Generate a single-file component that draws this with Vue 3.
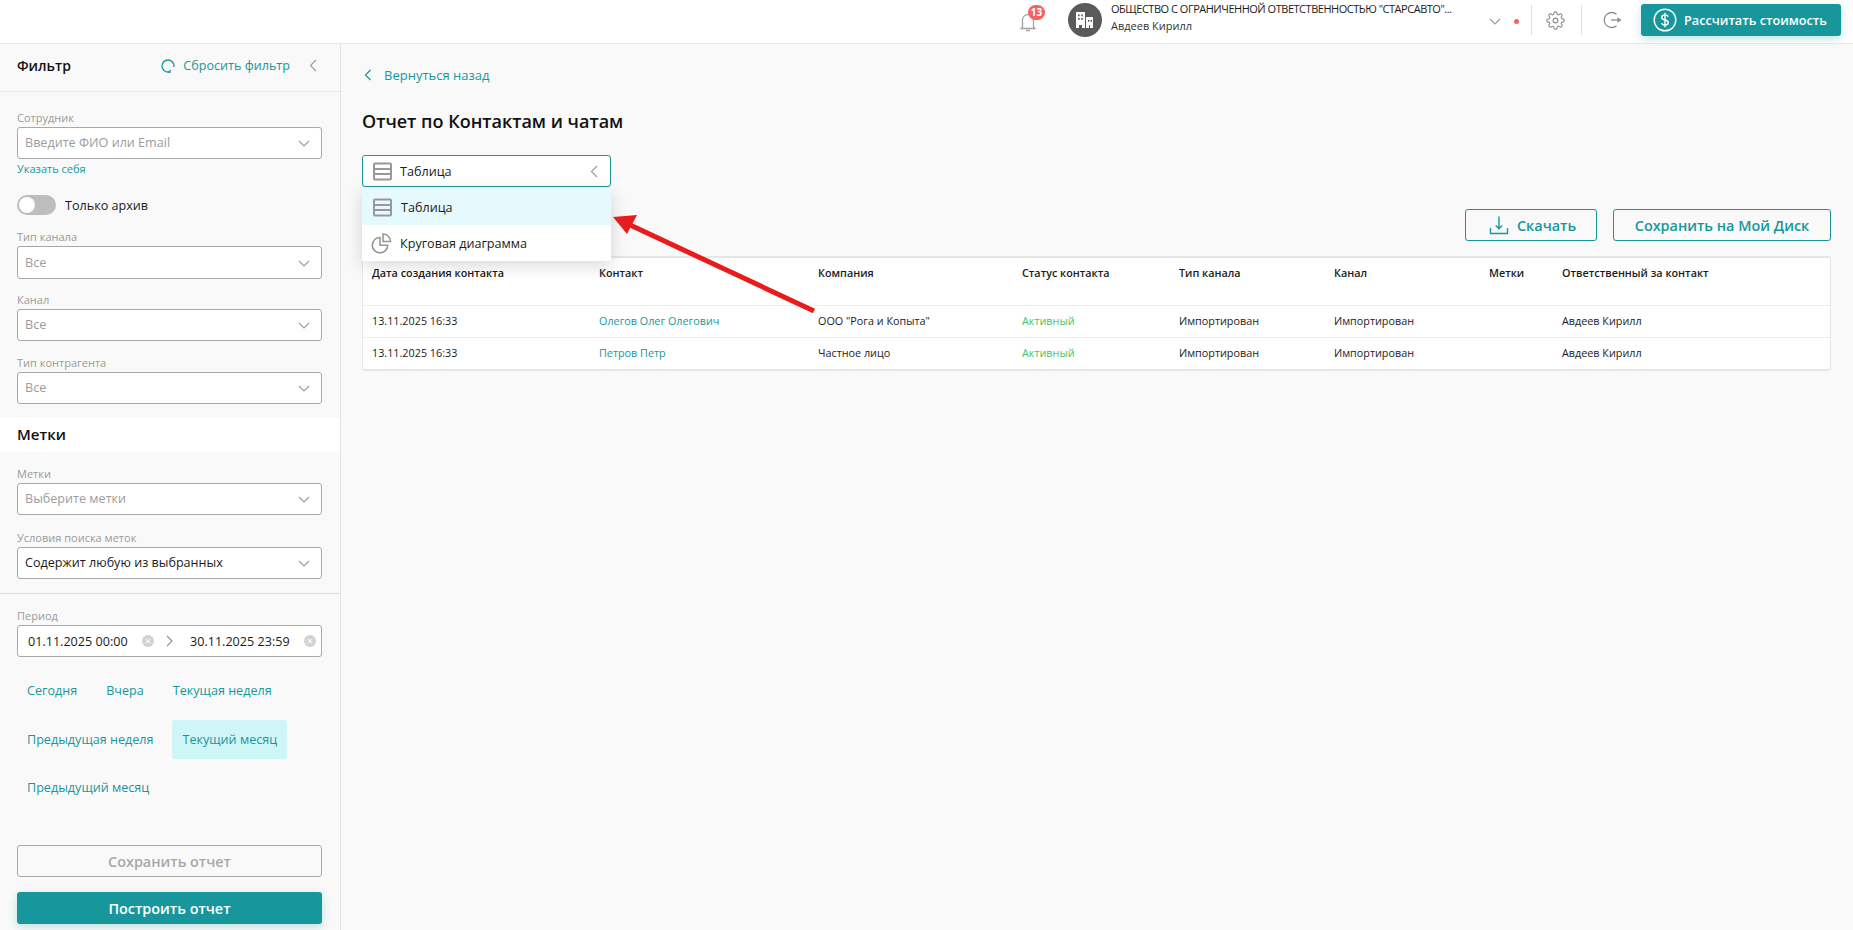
<script setup>
import { ref } from 'vue';

const periods = ref([
  { label: 'Сегодня' },
  { label: 'Вчера' },
  { label: 'Текущая неделя' },
  { label: 'Предыдущая неделя' },
  { label: 'Текущий месяц', active: true },
  { label: 'Предыдущий месяц' }
]);

const headers = ['Дата создания контакта', 'Контакт', 'Компания', 'Статус контакта', 'Тип канала', 'Канал', 'Метки', 'Ответственный за контакт'];

const rows = ref([
  { date: '13.11.2025 16:33', contact: 'Олегов Олег Олегович', company: 'ООО "Рога и Копыта"', status: 'Активный', type: 'Импортирован', channel: 'Импортирован', tags: '', owner: 'Авдеев Кирилл' },
  { date: '13.11.2025 16:33', contact: 'Петров Петр', company: 'Частное лицо', status: 'Активный', type: 'Импортирован', channel: 'Импортирован', tags: '', owner: 'Авдеев Кирилл' }
]);
</script>

<template>
  <div class="page">
    <header class="topbar">
      <div class="bell">
        <svg width="16" height="20" viewBox="0 0 16 20" fill="none" stroke="#a3a3a3" stroke-width="1.3">
          <path d="M2.5 15V8a5.5 5.5 0 0 1 11 0v7l1.5 1.5H1z" stroke-linejoin="round" />
          <path d="M6.5 18.5h3" stroke-linecap="round" />
        </svg>
        <span class="badge">13</span>
      </div>
      <div class="avatar">
        <svg width="20" height="18" viewBox="0 0 20 18" fill="#fff">
          <path d="M1 1h9v16H7v-3H4v3H1z" />
          <path d="M11 6h7v11h-3v-3h-1v3h-3z" />
          <g fill="#5a5a5c">
            <rect x="3" y="3.5" width="1.6" height="1.8" /><rect x="6.2" y="3.5" width="1.6" height="1.8" />
            <rect x="3" y="7" width="1.6" height="1.8" /><rect x="6.2" y="7" width="1.6" height="1.8" />
            <rect x="13" y="9" width="1.4" height="1.8" /><rect x="15.6" y="9" width="1.4" height="1.8" />
          </g>
        </svg>
      </div>
      <div class="account">
        <div class="company">ОБЩЕСТВО С ОГРАНИЧЕННОЙ ОТВЕТСТВЕННОСТЬЮ "СТАРСАВТО"...</div>
        <div class="user">Авдеев Кирилл</div>
      </div>
      <svg class="account-chevron" width="12" height="7" viewBox="0 0 12 7" fill="none" stroke="#9a9a9a" stroke-width="1.1"><path d="M1 1l5 5 5-5" /></svg>
      <span class="dot"></span>
      <span class="vline"></span>
      <svg class="gear" width="19" height="19" viewBox="0 0 24 24" fill="none" stroke="#8f8f8f" stroke-width="1.5">
        <circle cx="12" cy="12" r="3" />
        <path d="M19.4 15a1.65 1.65 0 0 0 .33 1.82l.06.06a2 2 0 0 1 0 2.83 2 2 0 0 1-2.83 0l-.06-.06a1.65 1.65 0 0 0-1.82-.33 1.65 1.65 0 0 0-1 1.51V21a2 2 0 0 1-2 2 2 2 0 0 1-2-2v-.09A1.65 1.65 0 0 0 9 19.4a1.65 1.65 0 0 0-1.82.33l-.06.06a2 2 0 0 1-2.83 0 2 2 0 0 1 0-2.83l.06-.06a1.65 1.65 0 0 0 .33-1.82 1.65 1.65 0 0 0-1.51-1H3a2 2 0 0 1-2-2 2 2 0 0 1 2-2h.09A1.65 1.65 0 0 0 4.6 9a1.65 1.65 0 0 0-.33-1.82l-.06-.06a2 2 0 0 1 0-2.83 2 2 0 0 1 2.83 0l.06.06a1.65 1.65 0 0 0 1.82.33H9a1.65 1.65 0 0 0 1-1.51V3a2 2 0 0 1 2-2 2 2 0 0 1 2 2v.09a1.65 1.65 0 0 0 1 1.51 1.65 1.65 0 0 0 1.82-.33l.06-.06a2 2 0 0 1 2.83 0 2 2 0 0 1 0 2.83l-.06.06a1.65 1.65 0 0 0-.33 1.82V9a1.65 1.65 0 0 0 1.51 1H21a2 2 0 0 1 2 2 2 2 0 0 1-2 2h-.09a1.65 1.65 0 0 0-1.51 1z" />
      </svg>
      <span class="vline vline-second"></span>
      <svg class="logout" width="18" height="18" viewBox="0 0 18 18" fill="none" stroke="#8f8f8f" stroke-width="1.3">
        <path d="M13.5 3.2a7.5 7.5 0 1 0 0 11.6" />
        <path d="M8 9h9.5" />
        <path d="M17.5 9l-2.5-1.5v3z" fill="#8f8f8f" />
      </svg>
      <button class="calc-btn">
        <svg width="24" height="24" viewBox="0 0 24 24" fill="none" stroke="#fff" stroke-width="1.4">
          <circle cx="12" cy="12" r="10.8" />
          <path d="M15.2 8.6c-.6-1.2-1.8-1.7-3.2-1.7-1.8 0-3.2.9-3.2 2.5 0 3.4 6.5 1.7 6.5 5.2 0 1.6-1.5 2.5-3.3 2.5-1.5 0-2.8-.6-3.4-1.9M12 4.8v14.4" />
        </svg>
        Рассчитать стоимость
      </button>
    </header>

    <div class="body">
      <aside class="sidebar">
        <div class="side-head">
          <span class="side-title">Фильтр</span>
          <a class="reset">
            <svg width="14" height="14" viewBox="0 0 14 14" fill="none" stroke="#17979c" stroke-width="1.3">
              <path d="M8 12.9A6 6 0 1 1 12.9 8" />
              <path d="M10 11.2l-2.2 1.7 1.7 1" />
            </svg>
            Сбросить фильтр
          </a>
          <svg class="collapse" width="8" height="13" viewBox="0 0 8 13" fill="none" stroke="#9a9a9a" stroke-width="1.1"><path d="M7 1L1.5 6.5 7 12" /></svg>
        </div>

        <div class="group group-first">
          <label class="label">Сотрудник</label>
          <div class="select muted">Введите ФИО или Email
            <svg class="chev" width="12" height="7" viewBox="0 0 12 7" fill="none" stroke="#9a9a9a" stroke-width="1.1"><path d="M1 1l5 5 5-5" /></svg>
          </div>
          <a class="self-link">Указать себя</a>
        </div>

        <div class="toggle-row">
          <span class="toggle"><span class="knob"></span></span>
          Только архив
        </div>

        <div class="group group-channel">
          <label class="label">Тип канала</label>
          <div class="select muted tall">Все
            <svg class="chev" width="12" height="7" viewBox="0 0 12 7" fill="none" stroke="#9a9a9a" stroke-width="1.1"><path d="M1 1l5 5 5-5" /></svg>
          </div>
        </div>
        <div class="group group-tight">
          <label class="label">Канал</label>
          <div class="select muted">Все
            <svg class="chev" width="12" height="7" viewBox="0 0 12 7" fill="none" stroke="#9a9a9a" stroke-width="1.1"><path d="M1 1l5 5 5-5" /></svg>
          </div>
        </div>
        <div class="group">
          <label class="label">Тип контрагента</label>
          <div class="select muted">Все
            <svg class="chev" width="12" height="7" viewBox="0 0 12 7" fill="none" stroke="#9a9a9a" stroke-width="1.1"><path d="M1 1l5 5 5-5" /></svg>
          </div>
        </div>

        <div class="section-title">Метки</div>

        <div class="group">
          <label class="label">Метки</label>
          <div class="select muted">Выберите метки
            <svg class="chev" width="12" height="7" viewBox="0 0 12 7" fill="none" stroke="#9a9a9a" stroke-width="1.1"><path d="M1 1l5 5 5-5" /></svg>
          </div>
        </div>
        <div class="group group-cond">
          <label class="label">Условия поиска меток</label>
          <div class="select">Содержит любую из выбранных
            <svg class="chev" width="12" height="7" viewBox="0 0 12 7" fill="none" stroke="#9a9a9a" stroke-width="1.1"><path d="M1 1l5 5 5-5" /></svg>
          </div>
        </div>

        <div class="divider"></div>

        <div class="group group-period">
          <label class="label">Период</label>
          <div class="date-range">
            <span class="date">01.11.2025 00:00</span>
            <span class="clear">×</span>
            <svg class="date-sep" width="7" height="12" viewBox="0 0 7 12" fill="none" stroke="#8f8f8f" stroke-width="1.1"><path d="M1 1l5 5-5 5" /></svg>
            <span class="date">30.11.2025 23:59</span>
            <span class="clear">×</span>
          </div>
        </div>

        <div class="periods">
          <a v-for="p in periods" :key="p.label" class="period" :class="{ active: p.active }">{{ p.label }}</a>
        </div>

        <div class="side-actions">
          <button class="save-report">Сохранить отчет</button>
          <button class="build-report">Построить отчет</button>
        </div>
      </aside>

      <main class="main">
        <a class="back">
          <svg width="8" height="12" viewBox="0 0 8 12" fill="none" stroke="#17979c" stroke-width="1.2"><path d="M6.5 1L1.5 6l5 5" /></svg>
          Вернуться назад
        </a>
        <h1 class="title">Отчет по Контактам и чатам</h1>

        <div class="view-wrap">
          <div class="view-select">
            <svg width="19" height="19" viewBox="0 0 19 19" fill="none" stroke="#989898" stroke-width="2">
              <rect x="1" y="1.5" width="17" height="16" rx="1" />
              <path d="M1 7h17M1 12h17" />
            </svg>
            <span>Таблица</span>
            <svg class="view-chev" width="8" height="13" viewBox="0 0 8 13" fill="none" stroke="#9a9a9a" stroke-width="1.1"><path d="M7 1L1.5 6.5 7 12" /></svg>
          </div>
          <div class="view-menu">
            <div class="view-item selected">
              <svg width="19" height="19" viewBox="0 0 19 19" fill="none" stroke="#989898" stroke-width="2">
                <rect x="1" y="1.5" width="17" height="16" rx="1" />
                <path d="M1 7h17M1 12h17" />
              </svg>
              <span>Таблица</span>
            </div>
            <div class="view-item">
              <svg class="pie" width="21" height="21" viewBox="0 0 21 21" fill="none" stroke="#989898" stroke-width="1.6">
                <path d="M9 4.5a7.7 7.7 0 1 0 7.7 7.7H9z" />
                <path d="M12 1a7.5 7.5 0 0 1 7.5 7.5H12z" />
              </svg>
              <span>Круговая диаграмма</span>
            </div>
          </div>
        </div>

        <div class="toolbar">
          <button class="outline">
            <svg width="20" height="20" viewBox="0 0 20 20" fill="none" stroke="#17979c" stroke-width="1.4">
              <path d="M10 1.5v12M6.8 10.5l3.2 3.2 3.2-3.2" />
              <path d="M1.5 13v5.5h17V13" />
            </svg>
            Скачать
          </button>
          <button class="outline">Сохранить на Мой Диск</button>
        </div>

        <div class="report">
          <div class="row head">
            <div v-for="h in headers" :key="h" class="cell">{{ h }}</div>
          </div>
          <div v-for="(r, i) in rows" :key="i" class="row">
            <div class="cell">{{ r.date }}</div>
            <div class="cell contact">{{ r.contact }}</div>
            <div class="cell">{{ r.company }}</div>
            <div class="cell status">{{ r.status }}</div>
            <div class="cell">{{ r.type }}</div>
            <div class="cell">{{ r.channel }}</div>
            <div class="cell">{{ r.tags }}</div>
            <div class="cell">{{ r.owner }}</div>
          </div>
        </div>

        <svg class="arrow" width="230" height="120" viewBox="0 0 230 120">
          <path d="M212 102L26 15" stroke="#e81c1c" stroke-width="5" fill="none" />
          <path d="M11 8L35 6L25 25z" fill="#e81c1c" />
        </svg>
      </main>
    </div>
  </div>
</template>

<style>
html, body { margin: 0; background: #f9f9f9; }
</style>

<style scoped>
.page {
  width: 1853px;
  height: 930px;
  display: flex;
  flex-direction: column;
  overflow: hidden;
  font-family: "Open Sans", "Noto Sans", sans-serif;
  font-size: 12.6px;
  color: #1b1b1b;
  background: #f9f9f9;
}
.topbar {
  height: 44px;
  flex: none;
  box-sizing: border-box;
  display: flex;
  align-items: center;
  background: #fff;
  border-bottom: 1px solid #e9e9e9;
  padding-left: 1020px;
}
.bell { position: relative; width: 16px; height: 20px; margin-top: 1px; }
.badge {
  position: absolute;
  left: 8px;
  top: -7px;
  width: 17px;
  height: 15px;
  border-radius: 8px;
  background: #f26464;
  color: #fff;
  font-size: 10px;
  font-weight: 700;
  line-height: 15px;
  text-align: center;
}
.avatar {
  width: 34px;
  height: 34px;
  margin-left: 32px;
  margin-top: -3px;
  border-radius: 50%;
  background: #5a5a5c;
  display: flex;
  align-items: center;
  justify-content: center;
}
.account { margin-left: 9px; width: 368px; margin-top: -9px; }
.company { font-size: 11px; line-height: 15px; white-space: nowrap; letter-spacing: -0.48px; }
.user { font-size: 11px; line-height: 15px; margin-top: 2px; color: #333; }
.account-chevron { margin-left: 10px; }
.dot { width: 5px; height: 5px; border-radius: 50%; background: #f26464; margin-left: 13px; }
.vline { width: 1px; height: 30px; background: #dedede; margin-left: 12px; margin-top: -4px; }
.gear { margin-left: 14px; margin-top: -3px; }
.vline-second { margin-left: 16px; }
.logout { margin-left: 21px; margin-top: -4px; }
.calc-btn {
  margin-left: 20px;
  margin-top: -4px;
  width: 200px;
  height: 32px;
  box-sizing: border-box;
  padding: 0 0 0 12px;
  display: flex;
  align-items: center;
  gap: 7px;
  border: none;
  border-radius: 3px;
  background: #17979c;
  color: #fff;
  font-family: inherit;
  font-size: 12.7px;
  font-weight: 600;
  box-shadow: 0 3px 8px rgba(23, 151, 156, 0.25);
}
.body { flex: 1; display: flex; min-height: 0; }
.sidebar {
  width: 341px;
  flex: none;
  box-sizing: border-box;
  display: flex;
  flex-direction: column;
  border-right: 1px solid #e4e4e4;
  background: #f9f9f9;
}
.side-head {
  height: 48px;
  flex: none;
  box-sizing: border-box;
  display: flex;
  align-items: center;
  padding: 0 23px 4px 17px;
  border-bottom: 1px solid #e9e9e9;
}
.side-title { font-size: 14px; font-weight: 600; color: #111; }
.reset { margin-left: auto; display: flex; align-items: center; gap: 8px; color: #17979c; font-size: 12.6px; }
.collapse { margin-left: 19px; }
.group { padding: 0 18px 0 17px; margin-top: 15px; }
.group-first { margin-top: 19px; }
.group-tight { margin-top: 14px; }
.group-cond { margin-top: 16px; }
.group-period { margin-top: 15px; }
.label { display: block; font-size: 11px; line-height: 14px; margin-bottom: 2px; color: #9a9a9a; }
.select {
  position: relative;
  height: 32px;
  box-sizing: border-box;
  display: flex;
  align-items: center;
  padding: 0 0 1px 7px;
  background: #fff;
  border: 1px solid #a8a8a8;
  border-radius: 3px;
  color: #1b1b1b;
  font-size: 12.6px;
}
.select.tall { height: 33px; }
.select.muted { color: #9c9c9c; }
.chev { position: absolute; right: 11px; top: 50%; margin-top: -3px; }
.self-link { display: block; margin-top: 3px; color: #17979c; font-size: 11px; line-height: 14px; }
.toggle-row { display: flex; align-items: center; gap: 9px; margin: 19px 17px 0; height: 20px; font-size: 12.6px; }
.toggle { width: 39px; height: 20px; border-radius: 10px; background: #bdbdbd; position: relative; }
.knob { position: absolute; left: 2px; top: 2px; width: 16px; height: 16px; border-radius: 50%; background: #fff; }
.section-title {
  margin-top: 14px;
  height: 34px;
  flex: none;
  background: #fff;
  padding-left: 17px;
  font-size: 15px;
  font-weight: 600;
  line-height: 32px;
  color: #111;
}
.divider { height: 1px; background: #dcdcdc; margin-top: 14px; flex: none; }
.date-range {
  height: 32px;
  box-sizing: border-box;
  display: flex;
  align-items: center;
  padding-left: 10px;
  background: #fff;
  border: 1px solid #a8a8a8;
  border-radius: 3px;
  font-size: 12.6px;
}
.date { width: 108px; white-space: nowrap; }
.clear {
  width: 12px;
  height: 12px;
  margin-left: 6px;
  border-radius: 50%;
  background: #d2d2d2;
  color: #fff;
  font-size: 11px;
  line-height: 11px;
  text-align: center;
}
.date-sep { margin-left: 12px; margin-right: 17px; }
.periods { display: flex; flex-wrap: wrap; gap: 9.5px 9px; padding: 0 17px; margin-top: 14px; }
.period {
  height: 39px;
  box-sizing: border-box;
  padding: 0 10px;
  line-height: 39px;
  border-radius: 3px;
  color: #17979c;
  font-size: 12.6px;
}
.period.active { background: #cff6f7; }
.side-actions {
  margin-top: auto;
  padding: 0 18px 6px 17px;
  display: flex;
  flex-direction: column;
  gap: 15px;
}
.side-actions button {
  height: 32px;
  border-radius: 3px;
  font-family: inherit;
  font-size: 14.4px;
  font-weight: 600;
}
.save-report { background: transparent; border: 1px solid #a8a8a8; color: #a8a8a8; }
.build-report { background: #17979c; border: none; color: #fff; box-shadow: 0 3px 8px rgba(23, 151, 156, 0.25); }
.main { flex: 1; min-width: 0; position: relative; padding: 0 22px 0 21px; }
.back {
  display: flex;
  align-items: center;
  gap: 12px;
  margin-top: 21px;
  margin-left: 2px;
  height: 20px;
  color: #17979c;
  font-size: 13px;
  font-weight: 500;
}
.title {
  margin: 24px 0 0;
  font-size: 18px;
  font-weight: 600;
  line-height: 24px;
  color: #111;
}
.view-wrap { position: relative; width: 249px; margin-top: 22px; }
.view-select {
  height: 32px;
  box-sizing: border-box;
  display: flex;
  align-items: center;
  padding-left: 10px;
  background: #fff;
  border: 1px solid #17979c;
  border-radius: 3px;
  font-size: 12.6px;
}
.view-select span { margin-left: 8px; }
.view-chev { margin-left: auto; margin-right: 12px; }
.view-menu {
  position: absolute;
  left: 0;
  top: 34px;
  width: 249px;
  z-index: 2;
  background: #fff;
  box-shadow: 0 4px 16px rgba(0, 0, 0, 0.16);
}
.view-item {
  height: 36px;
  display: flex;
  align-items: center;
  padding-left: 11px;
  font-size: 12.6px;
}
.view-item span { margin-left: 9px; }
.view-item.selected { background: #e6f9fc; }
.pie { margin-left: -2px; }
.view-item .pie + span { margin-left: 8px; }
.toolbar { display: flex; justify-content: flex-end; gap: 16px; margin-top: 22px; }
.outline {
  height: 32px;
  box-sizing: border-box;
  display: flex;
  align-items: center;
  gap: 8px;
  padding: 0 21px;
  background: transparent;
  border: 1px solid #17979c;
  border-radius: 3px;
  color: #17979c;
  font-family: inherit;
  font-size: 14.4px;
  font-weight: 600;
}
.outline:first-child { width: 132px; padding: 0 0 0 23px; }
.outline:last-child { width: 218px; justify-content: center; padding: 0; }
.report {
  margin-top: 15px;
  box-sizing: border-box;
  height: 115px;
  background: #fff;
  border: 1px solid #e6e6e6;
  border-top-width: 2px;
  border-bottom-width: 2px;
  border-radius: 3px;
}
.row {
  display: grid;
  grid-template-columns: 227px 219px 204px 157px 155px 155px 73px 1fr;
  padding: 0 0 2px 9px;
  height: 32px;
  align-items: center;
  border-top: 1px solid #ececec;
  box-sizing: border-box;
  font-size: 10.8px;
  color: #1b1b1b;
}
.row.head {
  height: 47px;
  border-top: none;
  align-items: flex-start;
  padding-top: 7px;
  font-weight: 600;
}
.contact { color: #17979c; }
.status { color: #45c463; }
.arrow {
  position: absolute;
  left: 261px;
  top: 165px;
  z-index: 3;
}
</style>
